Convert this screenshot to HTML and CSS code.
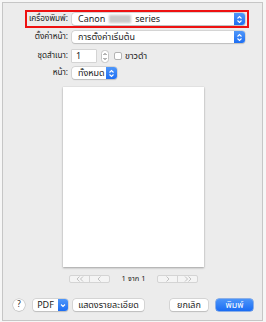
FILE: index.html
```html
<!DOCTYPE html>
<html lang="th">
<head>
<meta charset="utf-8">
<link rel="stylesheet" href="styles.css">
</head>
<body>
<div class="panel">
  <div class="row row-printer">
    <span class="label">เครื่องพิมพ์:</span>
    <div class="popup popup-wide">
      <span class="popup-text">Canon <span class="blur"></span> series</span>
      <span class="stepper-blue"><svg width="7" height="9" viewBox="0 0 7 9"><path d="M1.5 3.5 L3.5 1.5 L5.5 3.5 M1.5 5.5 L3.5 7.5 L5.5 5.5" fill="none" stroke="#fff" stroke-width="1.1"/></svg></span>
    </div>
    <span class="highlight"></span>
  </div>
  <div class="row row-preset">
    <span class="label">ตั้งค่าหน้า:</span>
    <div class="popup popup-wide">
      <span class="popup-text">การตั้งค่าเริ่มต้น</span>
      <span class="stepper-blue"><svg width="7" height="9" viewBox="0 0 7 9"><path d="M1.5 3.5 L3.5 1.5 L5.5 3.5 M1.5 5.5 L3.5 7.5 L5.5 5.5" fill="none" stroke="#fff" stroke-width="1.1"/></svg></span>
    </div>
  </div>
  <div class="row row-copies">
    <span class="label">ชุดสำเนา:</span>
    <div class="input">1</div>
    <span class="stepper-small"><svg width="8" height="13" viewBox="0 0 8 13"><rect x="0.5" y="0.5" width="7" height="12" rx="3" fill="#fff" stroke="#c4c4c4"/><path d="M2.5 5 L4 3.5 L5.5 5 M2.5 8 L4 9.5 L5.5 8" fill="none" stroke="#555" stroke-width="0.9"/></svg></span>
    <span class="checkbox"></span>
    <span class="check-label">ขาวดำ</span>
  </div>
  <div class="row row-pages">
    <span class="label">หน้า:</span>
    <div class="popup popup-pages">
      <span class="popup-text">ทั้งหมด</span>
      <span class="stepper-blue"><svg width="7" height="9" viewBox="0 0 7 9"><path d="M1.5 3.5 L3.5 1.5 L5.5 3.5 M1.5 5.5 L3.5 7.5 L5.5 5.5" fill="none" stroke="#fff" stroke-width="1.1"/></svg></span>
    </div>
  </div>
  <div class="preview">
    <div class="paper"></div>
  </div>
  <div class="pager">
    <div class="seg-group">
      <span class="seg"><svg width="8" height="6" viewBox="0 0 8 6"><path d="M3.5 0.5 L1 3 L3.5 5.5 M7 0.5 L4.5 3 L7 5.5" fill="none" stroke="#b4b4b4" stroke-width="0.8"/></svg></span>
      <span class="seg"><svg width="5" height="6" viewBox="0 0 5 6"><path d="M3.5 0.5 L1 3 L3.5 5.5" fill="none" stroke="#b4b4b4" stroke-width="0.8"/></svg></span>
    </div>
    <span class="page-count">1 จาก 1</span>
    <div class="seg-group">
      <span class="seg"><svg width="5" height="6" viewBox="0 0 5 6"><path d="M1.5 0.5 L4 3 L1.5 5.5" fill="none" stroke="#b4b4b4" stroke-width="0.8"/></svg></span>
      <span class="seg"><svg width="8" height="6" viewBox="0 0 8 6"><path d="M1 0.5 L3.5 3 L1 5.5 M4.5 0.5 L7 3 L4.5 5.5" fill="none" stroke="#b4b4b4" stroke-width="0.8"/></svg></span>
    </div>
  </div>
  <div class="actions">
    <span class="help">?</span>
    <div class="pdf">
      <span class="pdf-text">PDF</span>
      <span class="pdf-arrow"><svg width="6" height="5" viewBox="0 0 6 5"><path d="M1 1.5 L3 3.5 L5 1.5" fill="none" stroke="#fff" stroke-width="1.1"/></svg></span>
    </div>
    <span class="btn btn-details">แสดงรายละเอียด</span>
    <span class="spacer"></span>
    <span class="btn btn-cancel">ยกเลิก</span>
    <span class="btn btn-print">พิมพ์</span>
  </div>
</div>
</body>
</html>
```
FILE: styles.css
```css
* { box-sizing: border-box; }
html, body { margin: 0; padding: 0; }
body {
  background: #f6f6f6;
  width: 266px;
  height: 322px;
  font-family: "Noto Sans Thai", "Noto Sans", "DejaVu Sans", sans-serif;
  font-size: 9px;
  color: #222;
  overflow: hidden;
}
.panel {
  margin: 2px 0 0 2px;
  width: 261px;
  height: 319px;
  border: 1px solid #c6c6c6;
  background: #ececec;
  display: flex;
  flex-direction: column;
}
.row {
  display: flex;
  align-items: center;
  height: 12px;
  position: relative;
}
.label {
  width: 65px;
  margin-right: 4px;
  text-align: right;
  white-space: nowrap;
  line-height: 12px;
  font-size: 8.2px;
}
.row-printer { margin-top: 10px; }
.row-preset { margin-top: 6px; }
.row-copies { margin-top: 7px; }
.row-pages { margin-top: 5px; }
.highlight {
  position: absolute;
  left: 22px;
  top: -3px;
  width: 224px;
  height: 18px;
  border: 2px solid #ee1111;
}
.popup {
  height: 12px;
  background: #fff;
  border-radius: 3px;
  box-shadow: 0 0 0 0.5px #c2c2c2, 0 0.5px 1px rgba(0,0,0,0.2);
  display: flex;
  align-items: center;
  justify-content: space-between;
}
.popup-wide { width: 173px; }
.popup-pages { width: 45px; }
.popup-text {
  padding-left: 6px;
  white-space: nowrap;
  display: flex;
  align-items: center;
  line-height: 12px;
}
.blur {
  display: inline-block;
  width: 22px;
  height: 8px;
  margin: 0 4px;
  background: #c9c9c9;
  filter: blur(1px);
}
.stepper-blue {
  width: 11px;
  height: 12px;
  border-radius: 0 3px 3px 0;
  background: linear-gradient(#4f97f9, #1d6ef3);
  display: flex;
  align-items: center;
  justify-content: center;
}
.input {
  width: 24px;
  height: 12px;
  background: #fff;
  box-shadow: 0 0 0 0.5px #bcbcbc;
  padding-left: 4px;
  line-height: 12px;
}
.stepper-small {
  margin-left: 5px;
  display: flex;
}
.checkbox {
  margin-left: 5px;
  width: 8px;
  height: 8px;
  background: #fff;
  border: 1px solid #b4b4b4;
  border-radius: 2px;
}
.check-label {
  margin-left: 3px;
  line-height: 12px;
}
.preview {
  margin-top: 8px;
  display: flex;
  justify-content: center;
  padding-left: 2px;
}
.paper {
  width: 141px;
  height: 180px;
  background: #fff;
  box-shadow: 0 1px 2px rgba(0,0,0,0.3), 0 0 1px rgba(0,0,0,0.15);
}
.pager {
  margin-top: 8px;
  display: flex;
  align-items: center;
  padding-left: 66px;
  height: 8px;
}
.seg-group {
  display: flex;
  width: 41px;
  height: 8px;
  border: 1px solid #d4d4d4;
  border-radius: 2px;
  background: #f4f4f4;
}
.seg {
  flex: 1;
  display: flex;
  align-items: center;
  justify-content: center;
}
.seg + .seg { border-left: 1px solid #d4d4d4; }
.page-count {
  width: 47px;
  text-align: center;
  font-size: 7.5px;
  line-height: 8px;
  color: #222;
}
.actions {
  margin-top: 16px;
  display: flex;
  align-items: center;
  padding: 0 9px 0 10px;
  height: 12px;
}
.help {
  width: 12px;
  height: 12px;
  border-radius: 50%;
  background: #fff;
  box-shadow: 0 0 0 0.5px #bcbcbc, 0 0.5px 1px rgba(0,0,0,0.2);
  font-size: 8px;
  line-height: 12px;
  text-align: center;
}
.pdf {
  margin-left: 8px;
  width: 35px;
  height: 12px;
  display: flex;
  background: #fff;
  border-radius: 3px;
  box-shadow: 0 0 0 0.5px #c2c2c2, 0 0.5px 1px rgba(0,0,0,0.2);
}
.pdf-text {
  flex: 1;
  text-align: center;
  line-height: 12px;
}
.pdf-arrow {
  width: 10px;
  border-radius: 0 3px 3px 0;
  background: linear-gradient(#4f97f9, #1d6ef3);
  display: flex;
  align-items: center;
  justify-content: center;
}
.btn {
  height: 12px;
  background: #fff;
  border-radius: 3px;
  box-shadow: 0 0 0 0.5px #c2c2c2, 0 0.5px 1px rgba(0,0,0,0.2);
  text-align: center;
  line-height: 12px;
  white-space: nowrap;
}
.btn-details { margin-left: 5px; width: 71px; }
.spacer { flex: 1; }
.btn-cancel { width: 38px; }
.btn-print {
  margin-left: 8px;
  width: 37px;
  color: #fff;
  background: linear-gradient(#4c95f9, #1a6cf3);
  box-shadow: 0 0 0 0.5px #2d72e0;
}
```
